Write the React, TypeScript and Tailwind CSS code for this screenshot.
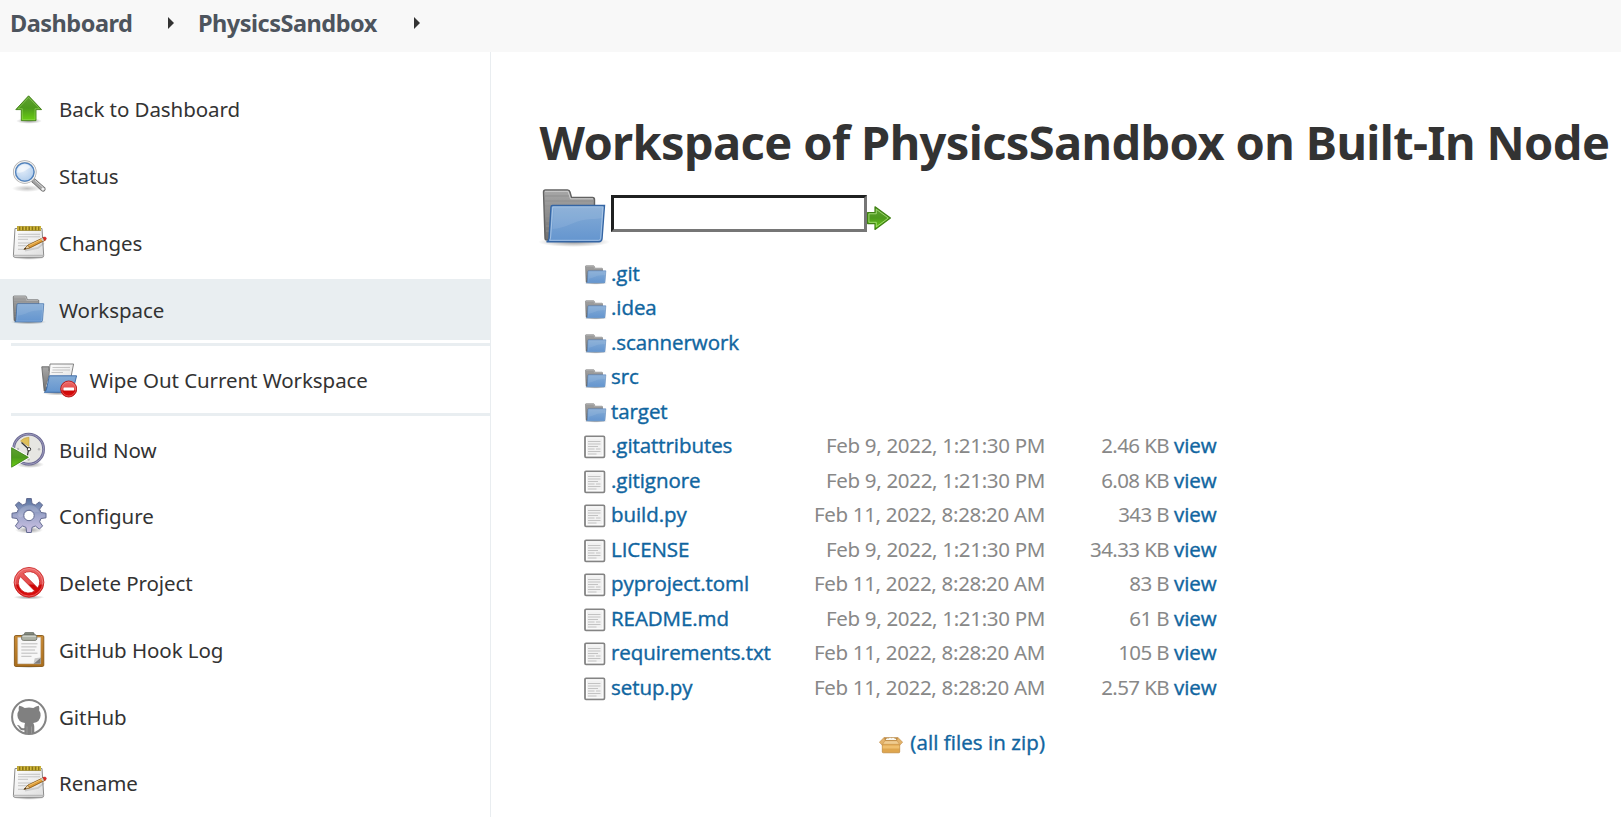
import type { ReactNode } from 'react';

type IconProps = { className?: string };

function Gradients() {
  return (
    <svg className="absolute size-0" aria-hidden="true">
      <defs>
        <linearGradient id="green" x1="0" y1="0" x2="0" y2="1">
          <stop offset="0" stopColor="#5f9f33" />
          <stop offset=".5" stopColor="#4d9a1c" />
          <stop offset="1" stopColor="#6bcf14" />
        </linearGradient>
        <linearGradient id="blue" x1="0" y1="0" x2="0" y2="1">
          <stop offset="0" stopColor="#85acd6" />
          <stop offset="1" stopColor="#6495cf" />
        </linearGradient>
        <linearGradient id="grey" x1="0" y1="0" x2="0" y2="1">
          <stop offset="0" stopColor="#a8a8a8" />
          <stop offset="1" stopColor="#707070" />
        </linearGradient>
        <linearGradient id="paper" x1="0" y1="0" x2="1" y2="1">
          <stop offset="0" stopColor="#ffffff" />
          <stop offset="1" stopColor="#dedede" />
        </linearGradient>
        <linearGradient id="red" x1="0" y1="0" x2="0" y2="1">
          <stop offset="0" stopColor="#ee6a6a" />
          <stop offset=".55" stopColor="#e24848" />
          <stop offset=".6" stopColor="#cc0606" />
          <stop offset="1" stopColor="#dd1010" />
        </linearGradient>
        <linearGradient id="gear" x1="0" y1="0" x2="0" y2="1">
          <stop offset="0" stopColor="#56729f" />
          <stop offset=".5" stopColor="#9fa6cb" />
          <stop offset="1" stopColor="#cfc3e4" />
        </linearGradient>
        <linearGradient id="wood" x1="0" y1="0" x2="0" y2="1">
          <stop offset="0" stopColor="#c88a35" />
          <stop offset="1" stopColor="#a96d1c" />
        </linearGradient>
        <radialGradient id="lens" cx=".4" cy=".35" r=".7">
          <stop offset="0" stopColor="#e6effa" />
          <stop offset="1" stopColor="#a9c8ea" />
        </radialGradient>
        <radialGradient id="shade">
          <stop offset="0" stopColor="#000" stopOpacity=".4" />
          <stop offset="1" stopColor="#000" stopOpacity="0" />
        </radialGradient>
      </defs>
    </svg>
  );
}

const UpIcon = () => (
  <svg viewBox="0 0 36 36" className="size-9 shrink-0">
    <ellipse cx="18" cy="30" rx="13" ry="2.8" fill="url(#shade)" />
    <path d="M17.6 4.8 30.6 18.6H25V29.6H10.3V18.6H4.8Z" fill="url(#green)" stroke="#3f7f14" strokeWidth=".9" />
    <path d="M17.6 6.4 28.4 17.7H24V28.7H11.3V17.7H7Z" fill="none" stroke="#a6de6e" strokeWidth=".7" opacity=".7" />
  </svg>
);

const SearchIcon = () => (
  <svg viewBox="0 0 36 36" className="size-9 shrink-0">
    <ellipse cx="16" cy="30.5" rx="15" ry="3.5" fill="url(#shade)" opacity=".6" />
    <path d="m22.5 22.5 9.600 8.600" stroke="#6f6f6f" strokeWidth="5" strokeLinecap="round" />
    <path d="m22.5 22.5 9.400 8.400" stroke="#a5a5a5" strokeWidth="3.400" strokeLinecap="round" />
    <path d="m24 22.4 8 7" stroke="#d9d9d9" strokeWidth="1" />
    <circle cx="32" cy="31" r="1.6" fill="#f2f2f2" />
    <circle cx="13.8" cy="14" r="10.6" fill="url(#lens)" stroke="#a8a8a8" strokeWidth="2.4" />
    <circle cx="13.8" cy="14" r="10.5" fill="none" stroke="#f3f3f3" strokeWidth="1.2" />
    <circle cx="13.8" cy="14" r="9.2" fill="none" stroke="#4f82bf" strokeWidth="1.3" />
    <path d="M6.2 14.5a7.6 7.6 0 0 1 13.5-5.2C15 11.400 12.500 15.500 6.200 14.500Z" fill="#fff" opacity=".55" />
  </svg>
);

const NotepadIcon = () => (
  <svg viewBox="0 0 36 36" className="size-9 shrink-0">
    <ellipse cx="18" cy="32.800" rx="16" ry="2" fill="url(#shade)" />
    <path d="M4 3.500H31L32.700 30.500Q32.700 32.300 31 32.300H4Q2.200 32.300 2.400 30.500Z" fill="url(#paper)" stroke="#8b8b8b" strokeWidth="1" />
    <path d="M2.800 30.300H32.300" stroke="#b2b2b2" strokeWidth="1" />
    <path d="M7 9.300H29M7 11.800H29M7 14.300H17M7 18H24M7 20.700H21M7 24.300H15" stroke="#bebebe" strokeWidth=".9" />
    <path d="M6 3.500H30" stroke="#8b7514" strokeWidth="4.600" />
    <path d="M7 1.200V5.300M10.200 1.200V5.300M13.400 1.200V5.300M16.600 1.200V5.300M19.800 1.200V5.300M23 1.200V5.300M26.200 1.200V5.300M29.200 1.200V5.300" stroke="#d3b93b" strokeWidth="1.600" />
    <path d="M14 25.500 27 23 33 18" stroke="#777" strokeWidth="1.800" fill="none" opacity=".25" />
    <path d="M13 24.300 17 20 32.500 12.600 34.300 15.200 19 22.900Z" fill="#dd9b36" stroke="#805012" strokeWidth=".8" />
    <path d="M17.500 20.700 32.300 13.500" stroke="#f4cb7b" strokeWidth=".9" />
    <path d="M13 24.300 16.800 20.200 18.700 22.900Z" fill="#ecd1a2" stroke="#74501f" strokeWidth=".5" />
    <path d="M13 24.300 14.300 22.700 15.300 23.800Z" fill="#222" />
    <path d="M30.800 13.200 32.200 16" stroke="#c9c9c9" strokeWidth="1.600" />
    <path d="M32 12.400Q34.500 11.400 35.300 12.900 35.700 14.600 33.700 15.500Z" fill="#e82828" stroke="#ad2525" strokeWidth=".5" />
  </svg>
);

const FolderIcon = ({ className }: IconProps) => (
  <svg viewBox="0 0 72 72" className={className}>
    <ellipse cx="35" cy="60" rx="36" ry="5" fill="url(#shade)" />
    <path d="M4.500 10Q4.500 8 6.500 8H28.500Q30.500 8 31 10L32.500 15.500H53.500Q55.500 15.500 55.500 17.500V58H8Q6 58 6 56Z" fill="url(#grey)" stroke="#626262" strokeWidth="1.400" />
    <path d="M6 9.300H29L31.500 16.800H54" fill="none" stroke="#cecece" strokeWidth="1" />
    <path d="M6 14H30M6 19H55M6 24H15M6 29H13M7 34H12M7 39H12M7 44H11M7 49H10" stroke="#8f8f8f" strokeWidth="1" />
    <path d="M13.500 23.500H65.500L63 57Q62.500 59.800 60 59.800H7.500Q9.600 59.500 10 56.500L12 25Q12.100 23.500 13.500 23.500Z" fill="url(#blue)" stroke="#3465a4" strokeWidth="1.400" />
    <path d="M13.800 25H64L61.700 56.300Q61.500 58.300 59.500 58.300H10.600Q11.500 57 11.600 55Z" fill="none" stroke="#b4cde9" strokeWidth="1" opacity=".75" />
    <path d="M13.500 47C27 46 32 41 42 38.500 50 36.500 57 37.500 63 36L64 26H15Z" fill="#fff" opacity=".09" />
  </svg>
);

const WipeIcon = () => (
  <svg viewBox="0 0 36 36" className="size-9 shrink-0">
    <ellipse cx="17" cy="31" rx="16" ry="2.500" fill="url(#shade)" />
    <path d="M.8 4.800H8V9H26V29H3.200Z" fill="url(#grey)" stroke="#666" strokeWidth=".9" />
    <path d="M9 2H32.600L30.200 14 27.500 25H4.500L8 13Z" fill="url(#paper)" stroke="#777" strokeWidth=".9" />
    <path d="M11.500 5.500H29M11.500 8H29M10.500 10.500H22" stroke="#b9b9b9" strokeWidth=".8" />
    <path d="M8.300 13.800H35.600L31.500 30.300H3.300Q5.200 29.500 5.800 26Z" fill="url(#blue)" stroke="#3465a4" strokeWidth=".9" />
    <circle cx="27.700" cy="27" r="8" fill="url(#red)" stroke="#b01010" strokeWidth=".9" />
    <circle cx="27.700" cy="27" r="7" fill="none" stroke="#f59a9a" strokeWidth=".6" opacity=".7" />
    <rect x="22.500" y="25.500" width="10.500" height="3.100" rx=".6" fill="#fff" />
  </svg>
);

const ClockIcon = () => (
  <svg viewBox="0 0 36 36" className="size-9 shrink-0">
    <ellipse cx="19" cy="32.500" rx="14" ry="3.500" fill="url(#shade)" />
    <circle cx="17.600" cy="17.200" r="15" fill="#e6e6e2" stroke="#6c6a94" strokeWidth="2.800" />
    <circle cx="17.600" cy="17.200" r="15.200" fill="none" stroke="#a19fc0" strokeWidth=".9" />
    <path d="M18 14.500 9.500 9Q12.500 5.500 18 5.300Z" fill="#dfc05a" stroke="#bd9a35" strokeWidth=".5" />
    <path d="m10.500 10.500 7 6.500M17.700 17.200 16.300 24" stroke="#333" strokeWidth="1.200" />
    <circle cx="18" cy="17.200" r="1.700" fill="#fff" stroke="#222" strokeWidth=".9" />
    <circle cx="28" cy="17.200" r="1.200" fill="#b9b9b9" />
    <circle cx="7" cy="17" r="1.200" fill="#b9b9b9" />
    <circle cx="17.600" cy="27.500" r="1.200" fill="#b9b9b9" />
    <path d="M.6 15.300 18.200 25.300.6 35.700Z" fill="#4ba40d" stroke="#fff" strokeWidth="1.600" strokeLinejoin="round" />
    <path d="M.6 15.700 17.400 25.300.6 35.200Z" fill="url(#green)" stroke="#397d10" strokeWidth=".8" />
  </svg>
);

const GearIcon = () => (
  <svg viewBox="0 0 36 36" className="size-9 shrink-0">
    <ellipse cx="18" cy="32" rx="14" ry="3.500" fill="url(#shade)" />
    <path
      fillRule="evenodd"
      d="M15.700 .5H20.300L21 5.600 24.300 7 28.400 3.900 31.600 7.100 28.600 11.200 30 14.500 35 15.200V19.800L30 20.500 28.600 23.800 31.600 27.900 28.400 31.100 24.300 28 21 29.400 20.300 34.500H15.700L15 29.400 11.700 28 7.600 31.100 4.400 27.900 7.400 23.800 6 20.500 1 19.800V15.200L6 14.500 7.400 11.200 4.400 7.100 7.600 3.900 11.700 7 15 5.600ZM18 12.300A5.200 5.200 0 1 0 18 22.700 5.200 5.200 0 1 0 18 12.300Z"
      fill="url(#gear)"
      stroke="#636b91"
      strokeWidth="1"
      strokeLinejoin="round"
    />
    <path d="M7 17C8 11 12 7.500 18 7.200 23 7 27 10 28 14 24 13 23 15 20 11.500 14 10.500 12 14 12 18 10 20 8 20 7 17Z" fill="#fff" opacity=".16" />
  </svg>
);

const ForbiddenIcon = () => (
  <svg viewBox="0 0 36 36" className="size-9 shrink-0">
    <ellipse cx="18" cy="32.300" rx="15.500" ry="2.200" fill="url(#shade)" />
    <path
      fillRule="evenodd"
      d="M18 2.400A14.900 14.900 0 1 0 18 32.200 14.900 14.900 0 1 0 18 2.400ZM12.300 8.600 26.700 23A10.300 10.300 0 0 0 12.300 8.600ZM9.300 11.600A10.300 10.300 0 0 0 23.700 26Z"
      fill="url(#red)"
      stroke="#c62020"
      strokeWidth=".8"
    />
    <circle cx="18" cy="17.300" r="13.800" fill="none" stroke="#f6aaaa" strokeWidth=".7" opacity=".75" />
  </svg>
);

const ClipboardIcon = () => (
  <svg viewBox="0 0 36 36" className="size-9 shrink-0">
    <ellipse cx="18" cy="34.500" rx="15" ry="1.500" fill="url(#shade)" />
    <rect x="3.400" y="3.500" width="29.400" height="31" rx="1.400" fill="url(#wood)" stroke="#865819" strokeWidth=".9" />
    <path d="M6.800 5.500H29.600V31.800H6.800Z" fill="#f7f7f7" stroke="#cfcfcf" strokeWidth=".5" />
    <path d="M29.600 25.500V31.800H22.500Z" fill="#7e7e7e" />
    <path d="M29.600 25.500 22.500 31.800 23.700 26.300Z" fill="#c9c9c9" />
    <path d="M10.300 11.800H26.500M10.300 14.900H25.500M10.300 18H24M10.300 21.200H26.500M10.300 24.300H20.500" stroke="#bcbcbc" strokeWidth="1" />
    <rect x="13.500" y=".6" width="9.600" height="4" rx="1" fill="#858d80" stroke="#5d6158" strokeWidth=".7" />
    <path d="M10.600 4.500Q10.800 2.500 13 2.500H23.400Q25.600 2.500 25.800 4.500V7Q25.500 8.400 24 8.400H12.400Q10.900 8.400 10.600 7Z" fill="#adb2a6" stroke="#686c63" strokeWidth=".8" />
    <path d="M11.500 4.500H25" stroke="#d5d8d0" strokeWidth=".8" />
  </svg>
);

const OctocatIcon = () => (
  <svg viewBox="0 0 36 36" className="size-9 shrink-0">
    <circle cx="18" cy="18" r="16.900" fill="#fff" stroke="#848484" strokeWidth="2" />
    <path
      d="M8.200 6.700Q11 7 13.700 9 18 8 22.300 9 25 7 27.800 6.700 28.800 9.200 28.200 11.500 29.800 13.600 29.600 16.500 29.300 23 22.200 24 23.300 25.500 23.300 27.500V34Q18 36 13.400 34V31.300Q9.300 31.800 8 28.500 7.200 27.200 6 26.200 8 25.600 9.500 27.700 11 29.800 13.400 29V27.500Q13.400 25.500 14 24 6.700 23 6.400 16.500 6.200 13.600 7.800 11.500 7.200 9.200 8.200 6.700Z"
      fill="#808080"
    />
    <path d="M16 27.500V34.500M20.500 27.500V34.500" stroke="#a2a2a2" strokeWidth=".7" />
  </svg>
);

const FileIcon = () => (
  <svg viewBox="0 0 24 24" className="mt-[3px] size-6">
    <rect x="1" y="1.300" width="19.400" height="21" rx="1" fill="#f1f1f1" stroke="#848484" strokeWidth="1.800" />
    <rect x="2.500" y="2.800" width="16.400" height="18" fill="none" stroke="#fff" strokeWidth="1" />
    <path d="M4 6.500H16.500M4 9H16.500M4 11.500H14M4 14H10.500M12 14H16.500M4 16.500H16.500M4 19H12.500" stroke="#c3c3c3" strokeWidth="1.200" />
  </svg>
);

const GoIcon = () => (
  <svg viewBox="0 0 24 24" className="mt-[11px] size-6">
    <path d="M.6 6.500H8V.8L23.400 12 8 23.400V17.600H.6Z" fill="url(#green)" stroke="#3f8013" strokeWidth="1.200" strokeLinejoin="round" />
    <path d="M1.900 7.800H9.300V3.300L21.300 12 9.300 20.800V16.300H1.900Z" fill="none" stroke="#b3e685" strokeWidth=".9" opacity=".85" />
  </svg>
);

const BoxIcon = () => (
  <svg viewBox="0 0 24 24" className="mt-1 size-6">
    <path d="M3.300 11H20.700V20Q20.700 20.800 19.700 20.800H4.300Q3.300 20.800 3.300 20Z" fill="#dfa64e" stroke="#bb8435" strokeWidth=".7" />
    <path d="M3.700 13.500H20.300V16.500H3.700Z" fill="#efbf6e" />
    <path d="M5.500 5.200H18.500L20.700 10.500H3.300Z" fill="#b98743" />
    <path d="M6.500 8Q7.500 5.600 9.500 6.500 11 5.300 12.500 6.300 14.500 5.300 15.500 6.500 17 6 17.500 8Z" fill="#f8f8f2" />
    <path d="M5.300 5.200.3 10.300 3.300 13.200 6.500 9.300ZM18.700 5.200 23.700 10.300 20.700 13.200 17.500 9.300Z" fill="#e3b26a" stroke="#b98239" strokeWidth=".5" />
    <path d="M6 8.700H18L20.500 12.300H3.500Z" fill="#f0cc90" stroke="#c48f45" strokeWidth=".5" />
  </svg>
);

const Caret = () => (
  <svg viewBox="0 0 6 12" className="mb-0.5 h-3 w-1.5">
    <path d="M0 0 6 6 0 12Z" fill="#333" />
  </svg>
);

function Task({ icon, label, active, last }: { icon: ReactNode; label: string; active?: boolean; last?: boolean }) {
  return (
    <a
      className={`flex h-[61px] shrink-0 items-center gap-3 pl-[11px] ${active ? 'bg-[#e9eef1]' : ''} ${last ? '' : 'mb-[5.75px]'}`}
    >
      {icon}
      <span className="pt-px">{label}</span>
    </a>
  );
}

const folders = ['.git', '.idea', '.scannerwork', 'src', 'target'];

const files = [
  ['.gitattributes', 'Feb 9, 2022, 1:21:30 PM', '2.46 KB'],
  ['.gitignore', 'Feb 9, 2022, 1:21:30 PM', '6.08 KB'],
  ['build.py', 'Feb 11, 2022, 8:28:20 AM', '343 B'],
  ['LICENSE', 'Feb 9, 2022, 1:21:30 PM', '34.33 KB'],
  ['pyproject.toml', 'Feb 11, 2022, 8:28:20 AM', '83 B'],
  ['README.md', 'Feb 9, 2022, 1:21:30 PM', '61 B'],
  ['requirements.txt', 'Feb 11, 2022, 8:28:20 AM', '105 B'],
  ['setup.py', 'Feb 11, 2022, 8:28:20 AM', '2.57 KB'],
];

function LinkText({ children }: { children: ReactNode }) {
  return (
    <a className="font-['Open_Sans',sans-serif] text-[#1065a0] [-webkit-text-stroke:0.4px_#1065a0]">{children}</a>
  );
}

export default function App() {
  return (
    <div className="flex h-[817px] w-full flex-col overflow-hidden bg-white font-['Noto_Sans',sans-serif] text-[20.5px] tracking-[-0.07px] text-[#333]">
      <Gradients />
      <header className="flex h-[52px] shrink-0 items-center bg-[#f8f8f8] pb-[5px] text-[23.500px] font-bold tracking-[-0.5px] text-[#4d545d]">
        <span className="w-[168px] pl-2.5">Dashboard</span>
        <Caret />
        <span className="w-[240px] pl-6">PhysicsSandbox</span>
        <Caret />
      </header>

      <div className="flex min-h-0 grow">
        <aside className="flex w-[491px] shrink-0 flex-col border-r border-[#e9edf0] pt-[26.750px]">
          <Task icon={<UpIcon />} label="Back to Dashboard" />
          <Task icon={<SearchIcon />} label="Status" />
          <Task icon={<NotepadIcon />} label="Changes" />
          <Task icon={<FolderIcon className="size-9 shrink-0" />} label="Workspace" active last />
          <div className="my-[3px] ml-[11px] flex h-[73px] shrink-0 items-center gap-[12.500px] border-y-3 border-[#e9eef1] pl-[30px]">
            <WipeIcon />
            <span className="pt-px">Wipe Out Current Workspace</span>
          </div>
          <Task icon={<ClockIcon />} label="Build Now" />
          <Task icon={<GearIcon />} label="Configure" />
          <Task icon={<ForbiddenIcon />} label="Delete Project" />
          <Task icon={<ClipboardIcon />} label="GitHub Hook Log" />
          <Task icon={<OctocatIcon />} label="GitHub" />
          <Task icon={<NotepadIcon />} label="Rename" last />
        </aside>

        <main className="grow pt-[58px] pl-12">
          <h1 className="h-16 pl-[0.5px] text-[47px] leading-[64px] font-bold tracking-[-0.63px] whitespace-nowrap">
            Workspace of PhysicsSandbox on Built-In Node
          </h1>
          <form className="mt-2 flex">
            <FolderIcon className="size-[72px]" />
            <div className="flex pt-[13px]">
              <input
                type="text"
                aria-label="Path"
                className="h-[37px] w-64 border-3 border-t-[#1f2020] border-r-[#767676] border-b-[#767676] border-l-[#1f2020] bg-white px-1 outline-none"
              />
              <GoIcon />
            </div>
          </form>

          <div className="mt-[1.750px] ml-[45px] grid auto-rows-[34.500px] grid-cols-[27px_184px_250px_124px_auto] items-center">
            {folders.map((name) => (
              <div key={name} className="col-span-5 grid h-full grid-cols-subgrid items-center">
                <FolderIcon className="mt-1 size-6" />
                <LinkText>{name}</LinkText>
              </div>
            ))}
            {files.map(([name, date, size]) => (
              <div key={name} className="col-span-5 grid h-full grid-cols-subgrid items-center whitespace-nowrap">
                <FileIcon />
                <LinkText>{name}</LinkText>
                <span className="text-right tracking-[-0.32px] text-[#888]">{date}</span>
                <span className="text-right tracking-[-0.6px] text-[#888]">{size}</span>
                <span className="pl-[5px]">
                  <LinkText>view</LinkText>
                </span>
              </div>
            ))}
          </div>

          <div className="mt-5 flex h-9 w-[506px] items-center justify-end gap-[7px] tracking-[0.07px]">
            <BoxIcon />
            <LinkText>(all files in zip)</LinkText>
          </div>
        </main>
      </div>
    </div>
  );
}
